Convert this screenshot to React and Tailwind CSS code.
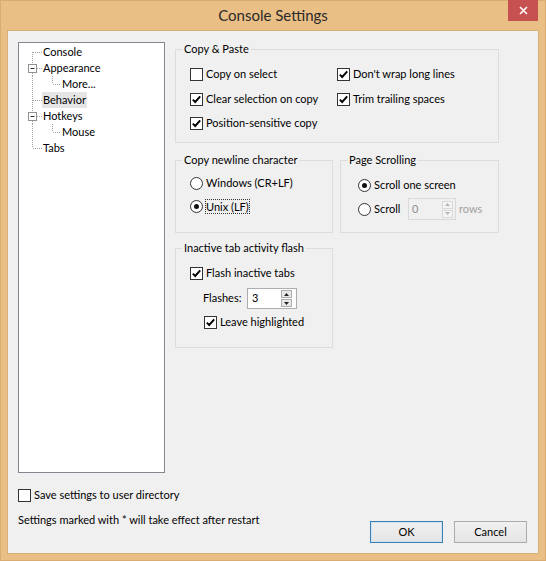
const dots = { stroke: "#a0a0a0", strokeDasharray: "1 1", fill: "none" };

const Check = ({ on }) => (
  <span className="flex h-[13px] w-[13px] shrink-0 items-center justify-center border border-[#333] bg-white">
    {on && (
      <svg width="11" height="11" viewBox="0 0 11 11">
        <path d="M1.8 5.6 L4.2 8 L9.2 2.4" fill="none" stroke="#000" strokeWidth="1.9" />
      </svg>
    )}
  </span>
);

const Radio = ({ on }) => (
  <span className="flex h-[13px] w-[13px] shrink-0 items-center justify-center rounded-full border border-[#333] bg-white">
    {on && <span className="h-[5px] w-[5px] rounded-full bg-[#111]" />}
  </span>
);

const CheckRow = ({ on, children, className = "" }) => (
  <div className={`flex h-4 items-center gap-[3px] ${className}`}>
    <Check on={on} />
    <span>{children}</span>
  </div>
);

const RadioRow = ({ on, children, className = "" }) => (
  <div className={`flex h-4 items-center gap-[3px] ${className}`}>
    <Radio on={on} />
    <span>{children}</span>
  </div>
);

const Spin = ({ disabled }) => {
  const c = disabled ? "#b5b5b5" : "#222";
  const b = disabled ? "border-[#dadada] bg-[#f4f4f4]" : "border-[#acacac] bg-[#e9e9e9]";
  return (
    <div className="flex flex-col gap-px">
      <span className={`flex h-[8px] w-[11px] items-center justify-center border ${b}`}>
        <svg width="5" height="3" viewBox="0 0 5 3"><path d="M0 3 L2.5 0 L5 3 Z" fill={c} /></svg>
      </span>
      <span className={`flex h-[8px] w-[11px] items-center justify-center border ${b}`}>
        <svg width="5" height="3" viewBox="0 0 5 3"><path d="M0 0 L2.5 3 L5 0 Z" fill={c} /></svg>
      </span>
    </div>
  );
};

// legend follows the fieldset padding, so the padding goes on an inner div
const Group = ({ title, className = "", inner = "", children }) => (
  <fieldset className={`border border-[#dcdcdc] ${className}`}>
    <legend className="ml-[6px] px-[2px] leading-4">{title}</legend>
    <div className={inner}>{children}</div>
  </fieldset>
);

const TreeRow = ({ child, label, selected, children }) => (
  <div className="flex h-4 items-center">
    <svg width={child ? 42 : 23} height="16" className="shrink-0">
      {children}
    </svg>
    <span className={`px-[1px] leading-4 ${selected ? "bg-[#e5e5e5]" : ""}`}>{label}</span>
  </div>
);

const Expander = () => (
  <>
    <path d="M13.5 0 V4" {...dots} />
    <path d="M13.5 13 V16" {...dots} />
    <rect x="9.5" y="4.5" width="8" height="8" fill="#fff" stroke="#919191" />
    <path d="M11.5 8.5 H15.5" stroke="#333" />
    <path d="M18 8.5 H23" {...dots} />
  </>
);

const Tree = () => (
  <div className="h-[431px] w-[147px] shrink-0 border border-[#828790] bg-white pt-px">
    <TreeRow label="Console">
      <path d="M13.5 8 V16 M14 8.5 H23" {...dots} />
    </TreeRow>
    <TreeRow label="Appearance">
      <Expander />
    </TreeRow>
    <TreeRow child label="More...">
      <path d="M13.5 0 V16 M33.5 0 V8 M34 8.5 H42" {...dots} />
    </TreeRow>
    <TreeRow label="Behavior" selected>
      <path d="M13.5 0 V16 M14 8.5 H23" {...dots} />
    </TreeRow>
    <TreeRow label="Hotkeys">
      <Expander />
    </TreeRow>
    <TreeRow child label="Mouse">
      <path d="M13.5 0 V16 M33.5 0 V8 M34 8.5 H42" {...dots} />
    </TreeRow>
    <TreeRow label="Tabs">
      <path d="M13.5 0 V8 M14 8.5 H23" {...dots} />
    </TreeRow>
  </div>
);

const Button = ({ def, children }) => (
  <button
    className={`flex h-[22px] w-[73px] items-center justify-center border bg-gradient-to-b from-[#f0f0f0] to-[#e5e5e5] ${
      def ? "border-[#3c7fb1] shadow-[inset_0_0_0_1px_#cde4f7]" : "border-[#acacac]"
    }`}
  >
    {children}
  </button>
);

export default function App() {
  return (
    <div className="relative flex h-[561px] w-[546px] flex-col border border-[#d9ad70] bg-[#eabf85] px-[6px] pb-[6px] font-['Lato',sans-serif] text-[11px] text-black">
      <div className="flex h-[29px] shrink-0 items-center justify-center pb-[1px] text-[15px] text-[#2a2a2a]">
        Console Settings
      </div>
      <div className="absolute right-[7px] top-[-1px] flex h-[21px] w-[30px] items-center justify-center bg-[#c75050]">
        <svg width="9" height="9" viewBox="0 0 9 9">
          <path d="M1 1 L8 8 M8 1 L1 8" stroke="#fff" strokeWidth="1.6" />
        </svg>
      </div>

      <div className="flex flex-1 flex-col border border-[#d8b07a] bg-[#f0f0f0] pl-[10px] pr-[11px]">
        <div className="flex items-start">
          <div className="mt-[11px]">
            <Tree />
          </div>
          <div className="ml-[10px] mt-[10px] flex flex-col">
            <Group title="Copy & Paste" className="h-[102px] w-[324px]" inner="flex pl-[14px]">
              <div className="w-[147px]">
                <CheckRow className="mt-[9px]">Copy on select</CheckRow>
                <CheckRow on className="mt-[9px]">Clear selection on copy</CheckRow>
                <CheckRow on className="mt-[8px]">Position-sensitive copy</CheckRow>
              </div>
              <div>
                <CheckRow on className="mt-[9px]">Don't wrap long lines</CheckRow>
                <CheckRow on className="mt-[9px]">Trim trailing spaces</CheckRow>
              </div>
            </Group>

            <div className="mt-[9px] flex gap-[7px]">
              <Group title="Copy newline character" className="h-[81px] w-[158px]" inner="pl-[14px]">
                <RadioRow className="mt-[7px]">Windows (CR+LF)</RadioRow>
                <div className="mt-[7px] flex h-4 items-center gap-[3px]">
                  <Radio on />
                  <span className="outline-1 outline-dotted outline-[#333] leading-[13px]">Unix (LF)</span>
                </div>
              </Group>
              <Group title="Page Scrolling" className="h-[81px] w-[159px]" inner="pl-[17px]">
                <RadioRow on className="mt-[9px]">Scroll one screen</RadioRow>
                <div className="mt-[5px] flex h-[22px] items-center">
                  <Radio />
                  <span className="ml-[3px] w-[34px]">Scroll</span>
                  <div className="flex h-[22px] w-[48px] items-center justify-between border border-[#d9d9d9] bg-[#f0f0f0] pl-[3px] pr-[2px] text-[#8d8d8d]">
                    <span>0</span>
                    <Spin disabled />
                  </div>
                  <span className="ml-[3px] text-[#a0a0a0]">rows</span>
                </div>
              </Group>
            </div>

            <Group title="Inactive tab activity flash" className="mt-[7px] h-[108px] w-[158px]" inner="pl-[14px]">
              <CheckRow on className="mt-[9px]">Flash inactive tabs</CheckRow>
              <div className="mt-[7px] flex h-[21px] items-center pl-[13px]">
                <span className="w-[44px]">Flashes:</span>
                <div className="flex h-[21px] w-[50px] items-center justify-between border border-[#abadb3] bg-white pl-[4px] pr-[4px]">
                  <span>3</span>
                  <Spin />
                </div>
              </div>
              <CheckRow on className="ml-[14px] mt-[5px]">Leave highlighted</CheckRow>
            </Group>
          </div>
        </div>

        <div className="mt-[14px] flex flex-1 justify-between">
          <div>
            <CheckRow>Save settings to user directory</CheckRow>
            <div className="mt-[9px] leading-4">Settings marked with * will take effect after restart</div>
          </div>
          <div className="flex gap-[11px] pt-[34px]">
            <Button def>OK</Button>
            <Button>Cancel</Button>
          </div>
        </div>
      </div>
    </div>
  );
}
